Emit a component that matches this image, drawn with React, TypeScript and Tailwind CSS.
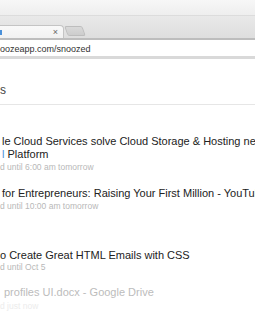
export default function App() {
  const font = "font-['Helvetica_Neue','Liberation_Sans',Arial,sans-serif]";
  return (
    <div className={`w-[255px] h-[333px] overflow-hidden bg-white ${font}`}>
      {/* window title area */}
      <div className="h-[16px] bg-gradient-to-b from-[#f7f7f7] to-[#eeeeee] border-b border-[#dcdcdc]" />
      {/* tab strip */}
      <div className="h-[22px] bg-gradient-to-b from-[#e9e9e9] to-[#dedede] flex items-end">
        <div className="w-[64px] h-[13px] bg-gradient-to-b from-[#f9f9f9] to-[#f1f1f1] border-t border-r border-[#c4c4c4] rounded-tr-[4px] flex items-center justify-between pr-[5px]">
          <div className="w-[2px] h-[5px] bg-[#4a90d9]" />
          <span className="text-[9px] leading-none text-[#666]">×</span>
        </div>
        <div className="ml-[2px] mb-[2px] w-[18px] h-[10px] bg-gradient-to-b from-[#d9d9d9] to-[#cdcdcd] border border-[#bdbdbd] rounded-[2px] skew-x-[20deg]" />
      </div>
      {/* toolbar / address */}
      <div className="h-[21px] bg-white border-t-2 border-b-[3px] border-t-[#bdbdbd] border-b-[#d9d9d9] flex items-center pt-[3px]">
        <span className="text-[9px] leading-none text-[#333] whitespace-nowrap">oozeapp.com/snoozed</span>
      </div>
      {/* page */}
      <div className="pt-[24px]">
        <div className="pb-[7px] border-b border-[#e6e6e6] text-[12px] leading-[14px] text-[#444]">s</div>
        <div className="mt-[30px] text-[#222] whitespace-nowrap">
          <div className="text-[11px] leading-[13px] pl-[2px]">le Cloud Services solve Cloud Storage &amp; Hosting needs</div>
          <div className="text-[11px] leading-[13px] pl-[2px]">
            <span className="text-[#4a90d9]">l</span> Platform
          </div>
          <div className="mt-[1px] text-[8.5px] leading-[11px] text-[#b8b8b8]">d until 6:00 am tomorrow</div>
        </div>
        <div className="mt-[14px] text-[#222] whitespace-nowrap">
          <div className="text-[11px] leading-[13px] pl-[2px]">for Entrepreneurs: Raising Your First Million - YouTube</div>
          <div className="mt-[1px] text-[8.5px] leading-[11px] text-[#b8b8b8]">d until 10:00 am tomorrow</div>
        </div>
        <div className="mt-[37px] text-[#222] whitespace-nowrap">
          <div className="text-[11px] leading-[13px]">o Create Great HTML Emails with CSS</div>
          <div className="text-[8.5px] leading-[11px] text-[#b8b8b8]">d until Oct 5</div>
        </div>
        <div className="mt-[13px] whitespace-nowrap">
          <div className="text-[11px] leading-[13px] pl-[4px] text-[#bcbcbc]">profiles UI.docx - Google Drive</div>
          <div className="mt-[2px] text-[8.5px] leading-[11px] text-[#ececec]">d just now</div>
        </div>
      </div>
    </div>
  );
}
